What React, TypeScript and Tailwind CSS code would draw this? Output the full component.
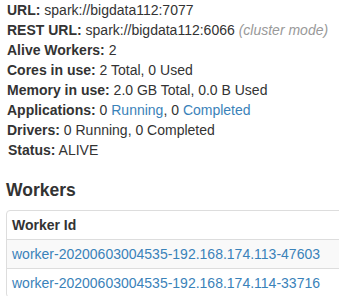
import React from "react";

export default function App() {
  const link = "text-[#3a82b9]";
  return (
    <div className="w-[339px] h-[296px] overflow-hidden bg-white text-[#333] text-[14px] leading-[20px]" style={{ fontFamily: '"Liberation Sans", Arial, sans-serif' }}>
      <ul className="pl-[7px]">
        <li><strong>URL:</strong> spark://bigdata112:7077</li>
        <li><strong>REST URL:</strong> spark://bigdata112:6066 <span className="italic text-[#999]">(cluster mode)</span></li>
        <li><strong>Alive Workers:</strong> 2</li>
        <li><strong>Cores in use:</strong> 2 Total, 0 Used</li>
        <li><strong>Memory in use:</strong> 2.0 GB Total, 0.0 B Used</li>
        <li><strong>Applications:</strong> 0 <span className={link}>Running</span>, 0 <span className={link}>Completed</span></li>
        <li><strong>Drivers:</strong> 0 Running, 0 Completed</li>
        <li className="pl-px"><strong>Status:</strong> ALIVE</li>
      </ul>
      <h4 className="mt-[20px] ml-[6px] text-[17.5px] leading-[20px] font-bold">Workers</h4>
      <div className="mt-[10px] ml-[6px] w-[420px] border border-[#ddd] rounded-[4px]">
        <div className="h-[28px] flex items-center px-[5px] font-bold">Worker Id</div>
        <div className="h-[29px] flex items-center px-[5px] border-t border-[#ddd] bg-[#f9f9f9]">
          <span className={link}>worker-20200603004535-192.168.174.113-47603</span>
        </div>
        <div className="h-[29px] flex items-center px-[5px] border-t border-[#ddd]">
          <span className={link}>worker-20200603004535-192.168.174.114-33716</span>
        </div>
      </div>
    </div>
  );
}
